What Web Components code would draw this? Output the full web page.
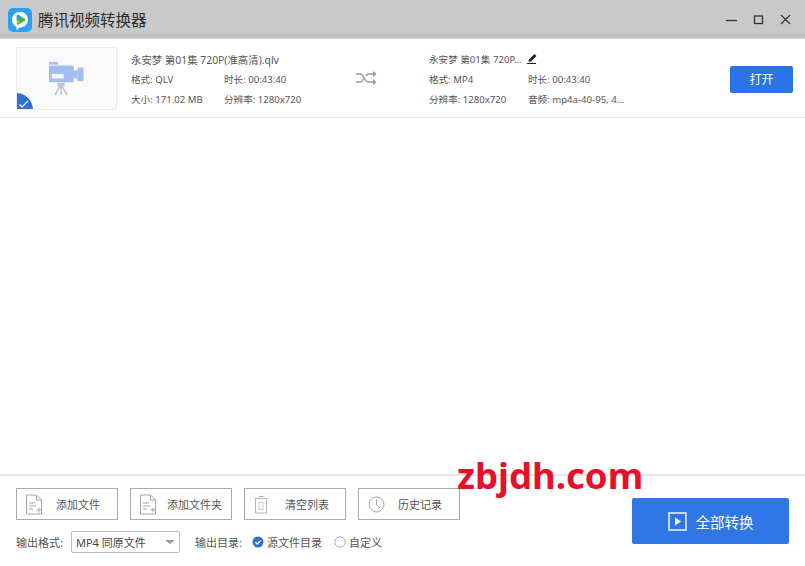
<!DOCTYPE html>
<html lang="zh">
<head>
<meta charset="utf-8">
<title>腾讯视频转换器</title>
<style>
html, body { margin: 0; padding: 0; background: #fff; }
body { font-family: "Noto Sans CJK SC", "Noto Sans", sans-serif; color: #555; }
</style>
</head>
<body>
<converter-app></converter-app>

<script>
const SVG_OPEN = '<svg xmlns="http://www.w3.org/2000/svg" fill="none"';

class TitleBar extends HTMLElement {
    connectedCallback() {
        this.attachShadow({ mode: 'open' });
        this.shadowRoot.innerHTML = `
            <style>
                :host {
                    display: flex;
                    align-items: center;
                    flex: none;
                    height: 39px;
                    box-sizing: border-box;
                    padding: 1px 14px 0 8px;
                    background: linear-gradient(#c9c9c9 0, #c9c9c9 33px, #bfbfbf 34px, #bfbfbf 37px, #d8d8d8 39px);
                }
                .logo { width: 24px; height: 25px; display: block; }
                .name {
                    margin: -2px 0 0 6px;
                    font-size: 15.500px;
                    color: #2b2b2b;
                    white-space: nowrap;
                }
                .btns { margin: -2px 0 0 auto; display: flex; gap: 16px; align-items: center; }
                .btns svg { display: block; width: 11px; height: 11px; }
            </style>
            ${SVG_OPEN} class="logo" viewBox="0 0 24 25">
                <rect width="24" height="24" rx="5" fill="#2ba0f5"/>
                <path d="M12 4c4.600 0 8 3.300 8 7.700s-3.400 7.700-8 7.700h-.6l-2.900 3v-3.700C5.700 17.600 4 15 4 11.700 4 7.300 7.400 4 12 4z" fill="#fff"/>
                <path d="M8.800 8c0-1 .9-1.500 1.700-1l6.200 3.800c.8.500.8 1.500 0 2l-6.200 3.700c-.8.500-1.700 0-1.700-1z" fill="#3bb54a"/>
                <path d="M8.800 11.500l3.800 2.400-2.100 1.300c-.8.500-1.700 0-1.700-1z" fill="#f5a623"/>
                <path d="M8.800 8c0-1 .9-1.500 1.700-1l2.800 1.700-4.500 2.800z" fill="#1f9ee8"/>
            </svg>
            <span class="name">腾讯视频转换器</span>
            <div class="btns">
                ${SVG_OPEN} viewBox="0 0 11 11"><path d="M0 6.500h11" stroke="#333" stroke-width="1.300"/></svg>
                ${SVG_OPEN} viewBox="0 0 11 11"><rect x="1.500" y="2" width="8" height="7.500" stroke="#333" stroke-width="1.300"/></svg>
                ${SVG_OPEN} viewBox="0 0 11 11"><path d="M1 1l9 9M10 1l-9 9" stroke="#333" stroke-width="1.200"/></svg>
            </div>
        `;
    }
}

class VideoThumb extends HTMLElement {
    connectedCallback() {
        this.attachShadow({ mode: 'open' });
        this.shadowRoot.innerHTML = `
            <style>
                :host {
                    display: flex;
                    align-items: center;
                    justify-content: center;
                    position: relative;
                    flex: none;
                    width: 101px;
                    height: 63px;
                    box-sizing: border-box;
                    border: 1px solid #ececec;
                    background: #fafafa;
                    overflow: hidden;
                }
                .cam { width: 39px; height: 35px; display: block; margin-right: 1px; }
                .check { position: absolute; left: -1px; bottom: -1px; width: 17px; height: 17px; display: block; }
            </style>
            ${SVG_OPEN} class="cam" viewBox="0 0 40 38">
                <rect x="1" y="1" width="10" height="3" fill="#a9c0ee"/>
                <rect x="1" y="5" width="27" height="18" rx="1.500" fill="#a3bdf0"/>
                <rect x="4" y="14" width="13" height="5" fill="#f4f6fb"/>
                <path d="M28 11l4-2v11l-4-2z" fill="#a3bdf0"/>
                <rect x="32" y="7" width="6.500" height="15" rx="1" fill="#a3bdf0"/>
                <rect x="10" y="24" width="8" height="3" fill="#b9c2d4"/>
                <path d="M13 27L7.500 37M14 27v10M15 27l5.500 10" stroke="#b3bccd" stroke-width="1.500"/>
            </svg>
            ${SVG_OPEN} class="check" viewBox="0 0 17 17">
                <path d="M0 0c9.400 0 17 7.600 17 17H0z" fill="#2f6fd8"/>
                <path d="M3.500 11.500l2.500 2.500 6-6" stroke="#fff" stroke-width="1.200"/>
            </svg>
        `;
    }
}

class MediaInfo extends HTMLElement {
    connectedCallback() {
        this.attachShadow({ mode: 'open' });
        this.shadowRoot.innerHTML = `
            <style>
                :host {
                    display: grid;
                    grid-template-columns: var(--col, 93px) auto;
                    grid-auto-rows: 20px;
                    align-items: center;
                    margin-top: 2px;
                    font-size: 9.600px;
                    color: #555;
                    white-space: nowrap;
                }
                ::slotted(.title) { grid-column: 1 / -1; }
            </style>
            <slot></slot>
        `;
    }
}

class FileRow extends HTMLElement {
    connectedCallback() {
        this.attachShadow({ mode: 'open' });
        this.shadowRoot.innerHTML = `
            <style>
                :host {
                    display: flex;
                    align-items: center;
                    flex: none;
                    height: 79px;
                    box-sizing: border-box;
                    padding: 0 12px 0 16px;
                    border-bottom: 1px solid #e8e8e8;
                    background: #fff;
                }
                .src { margin-left: 14px; width: 170px; flex: none; }
                .shuffle { width: 21px; height: 16px; display: block; margin: 0 52px 0 55px; flex: none; }
                .open {
                    margin: 2px 0 0 auto;
                    width: 63px;
                    height: 27px;
                    line-height: 27px;
                    text-align: center;
                    background: #2a74e6;
                    color: #fff;
                    font-size: 12px;
                    border-radius: 2px;
                }
                .title-line { display: inline-flex; align-items: center; gap: 5px; }
                .pen { width: 11px; height: 12px; display: block; margin-top: -2px; }
            </style>
            <video-thumb></video-thumb>
            <media-info class="src">
                <span class="title" style="font-size:10.400px">永安梦 第01集 720P(准高清).qlv</span>
                <span>格式: QLV</span><span>时长: 00:43:40</span>
                <span>大小: 171.02 MB</span><span>分辨率: 1280x720</span>
            </media-info>
            ${SVG_OPEN} class="shuffle" viewBox="0 0 21 16">
                <path d="M0 4h4.500c3 0 4 8 7.500 8h6M0 12h4.500c1.300 0 2.200-1.400 3-3M10 6c.6-1 1.200-2 2-2h6" stroke="#999" stroke-width="1.500"/>
                <path d="M17 1l3.500 3-3.500 3zM17 9l3.500 3-3.500 3z" fill="#999"/>
            </svg>
            <media-info style="--col: 99px">
                <span class="title title-line">永安梦 第01集 720P...
                    ${SVG_OPEN} class="pen" viewBox="0 0 11 12">
                        <path d="M2 7.500L7.500 2l2 2L4 9.500l-2.500.5z" fill="#222"/>
                        <path d="M0 11.500h9" stroke="#222"/>
                    </svg>
                </span>
                <span>格式: MP4</span><span>时长: 00:43:40</span>
                <span>分辨率: 1280x720</span><span>音频: mp4a-40-95, 4...</span>
            </media-info>
            <div class="open">打开</div>
        `;
    }
}

class ToolButton extends HTMLElement {
    connectedCallback() {
        this.attachShadow({ mode: 'open' });
        this.shadowRoot.innerHTML = `
            <style>
                :host {
                    display: flex;
                    align-items: center;
                    width: 102px;
                    height: 32px;
                    box-sizing: border-box;
                    border: 1px solid #aaa;
                    background: #fff;
                    font-size: 11px;
                    color: #555;
                    white-space: nowrap;
                    padding-left: 9px;
                }
                ::slotted(svg) { width: 19px; height: 21px; display: block; flex: none; }
                span { margin-left: var(--gap, 11px); }
            </style>
            <slot name="icon"></slot>
            <span><slot></slot></span>
        `;
    }
}

class RadioOption extends HTMLElement {
    connectedCallback() {
        this.attachShadow({ mode: 'open' });
        const on = this.hasAttribute('checked');
        this.shadowRoot.innerHTML = `
            <style>
                :host { display: inline-flex; align-items: center; gap: 3px; font-size: 11px; color: #555; white-space: nowrap; }
                svg { width: 12px; height: 12px; display: block; }
            </style>
            ${SVG_OPEN} viewBox="0 0 12 12">
                ${on
                    ? '<circle cx="6" cy="6" r="5.500" fill="#2f6fd8"/><path d="M3.300 6l2 2 3.400-3.600" stroke="#fff" stroke-width="1.300"/>'
                    : '<circle cx="6" cy="6" r="5.200" stroke="#aaa" fill="#fff"/>'}
            </svg>
            <slot></slot>
        `;
    }
}

class BottomPanel extends HTMLElement {
    connectedCallback() {
        this.attachShadow({ mode: 'open' });
        this.shadowRoot.innerHTML = `
            <style>
                :host {
                    display: flex;
                    flex: none;
                    height: 92px;
                    box-sizing: border-box;
                    border-top: 2px solid #e8e8e8;
                    padding: 12px 16px 0 16px;
                    background: #fff;
                }
                .left { display: flex; flex-direction: column; gap: 11px; }
                .tools { display: flex; gap: 12px; }
                .options { display: flex; align-items: center; font-size: 11px; white-space: nowrap; height: 22px; }
                .select {
                    display: flex;
                    align-items: center;
                    width: 109px;
                    height: 22px;
                    box-sizing: border-box;
                    margin: 0 15px 0 8px;
                    padding: 0 4px;
                    border: 1px solid #bbb;
                    border-radius: 2px;
                    color: #444;
                }
                .caret { margin-left: auto; width: 0; height: 0; border: 5px solid transparent; border-top: 4px solid #999; border-bottom: 0; }
                .radios { display: flex; gap: 12px; margin-left: 10px; }
                .all {
                    margin-left: auto;
                    display: flex;
                    align-items: center;
                    justify-content: center;
                    gap: 9px;
                    width: 157px;
                    height: 46px;
                    margin-top: 10px;
                    background: #3077e6;
                    border-radius: 2px;
                    color: #fff;
                    font-size: 14.500px;
                }
                .all svg { width: 19px; height: 19px; display: block; }
            </style>
            <div class="left">
                <div class="tools">
                    <tool-button>
                        ${SVG_OPEN} slot="icon" viewBox="0 0 19 21">
                            <path d="M.5 1h10l5 5v14H.5zM10.500 1v5h5" stroke="#a5a5a5"/>
                            <path d="M3 9h6M3 12h7M3 15h4M10 16h6M13 13.500v5" stroke="#a5a5a5"/>
                        </svg>添加文件
                    </tool-button>
                    <tool-button style="--gap: 8px">
                        ${SVG_OPEN} slot="icon" viewBox="0 0 19 21">
                            <path d="M.5 1h10l5 5v14H.5zM10.500 1v5h5" stroke="#a5a5a5"/>
                            <path d="M3 9h6M3 12h7M3 15h4M10 16h6M13 13.500v5" stroke="#a5a5a5"/>
                        </svg>添加文件夹
                    </tool-button>
                    <tool-button style="--gap: 12px">
                        ${SVG_OPEN} slot="icon" viewBox="0 0 19 21">
                            <path d="M4.500 2.500h5M.5 4.500h13M1.500 4.500V19h11V4.500" stroke="#b5b5b5"/>
                            <rect x="5" y="8.500" width="4" height="7" stroke="#ccc"/>
                        </svg>清空列表
                    </tool-button>
                    <tool-button>
                        ${SVG_OPEN} slot="icon" viewBox="0 0 19 21">
                            <circle cx="8.500" cy="10.500" r="7.500" stroke="#a5a5a5"/>
                            <path d="M8.500 5.500v5.500l3.500 3" stroke="#a5a5a5"/>
                        </svg>历史记录
                    </tool-button>
                </div>
                <div class="options">
                    <span>输出格式:</span>
                    <div class="select"><span>MP4 同原文件</span><i class="caret"></i></div>
                    <span>输出目录:</span>
                    <div class="radios">
                        <radio-option checked>源文件目录</radio-option>
                        <radio-option>自定义</radio-option>
                    </div>
                </div>
            </div>
            <div class="all">
                ${SVG_OPEN} viewBox="0 0 19 19">
                    <rect x="1" y="1" width="17" height="17" stroke="#fff" stroke-width="1.400"/>
                    <path d="M7 5.500l6 4-6 4z" fill="#fff"/>
                </svg>
                <span>全部转换</span>
            </div>
        `;
    }
}

class ConverterApp extends HTMLElement {
    connectedCallback() {
        this.attachShadow({ mode: 'open' });
        this.shadowRoot.innerHTML = `
            <style>
                :host {
                    display: flex;
                    flex-direction: column;
                    position: relative;
                    width: 805px;
                    height: 566px;
                    overflow: hidden;
                    background: #fff;
                    font-family: "Noto Sans", "Noto Sans CJK SC", sans-serif;
                }
                .list { flex: 1; }
                .watermark {
                    position: absolute;
                    left: 457px;
                    top: 451px;
                    font: 700 36.500px/48px "Noto Sans", sans-serif;
                    color: #e5112a;
                    white-space: nowrap;
                }
            </style>
            <title-bar></title-bar>
            <file-row></file-row>
            <div class="list"></div>
            <bottom-panel></bottom-panel>
            <div class="watermark">zbjdh.com</div>
        `;
    }
}

customElements.define('title-bar', TitleBar);
customElements.define('video-thumb', VideoThumb);
customElements.define('media-info', MediaInfo);
customElements.define('file-row', FileRow);
customElements.define('tool-button', ToolButton);
customElements.define('radio-option', RadioOption);
customElements.define('bottom-panel', BottomPanel);
customElements.define('converter-app', ConverterApp);
</script>
</body>
</html>
